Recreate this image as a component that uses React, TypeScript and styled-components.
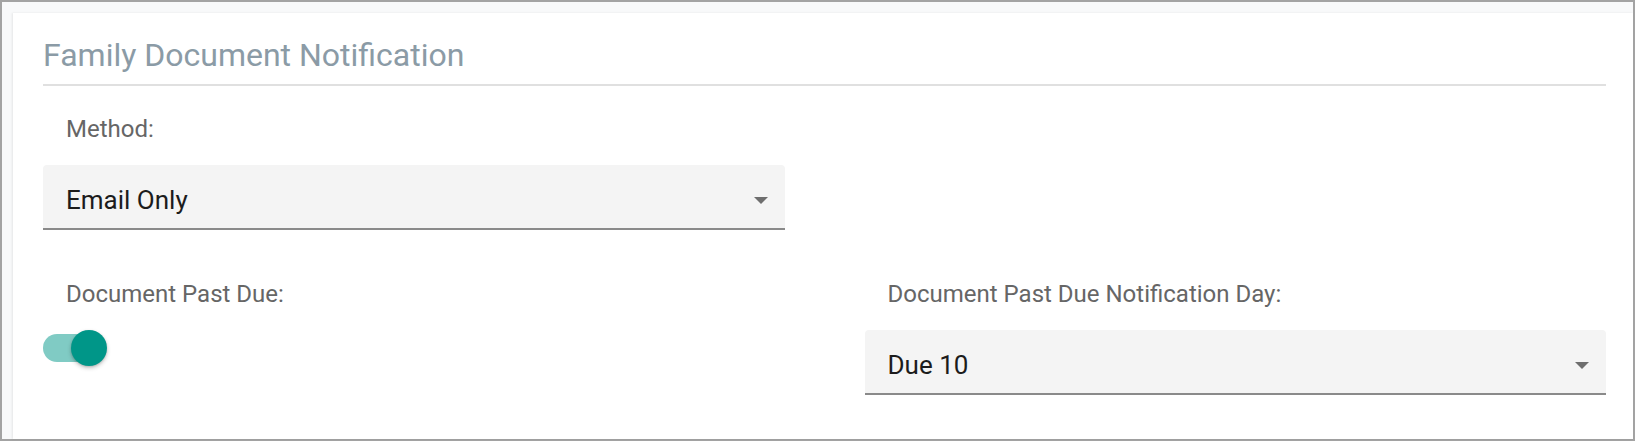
import React from "react";
import styled, { createGlobalStyle } from "styled-components";

const GlobalStyle = createGlobalStyle`
  html, body {
    margin: 0;
    padding: 0;
    background: #ffffff;
  }
  body {
    font-family: Roboto, "Liberation Sans", Arial, sans-serif;
  }
  * { box-sizing: border-box; }
`;

const Frame = styled.div`
  width: 1635px;
  height: 441px;
  border: 2px solid #a3a3a3;
  background: #f8f9fa;
  padding: 11px 0 0 11px;
  display: flex;
`;

const Card = styled.section`
  flex: 1;
  background: #ffffff;
  box-shadow: -1px 0 2px rgba(0, 0, 0, 0.08);
  padding: 23px 27px 0 30px;
  display: flex;
  flex-direction: column;
`;

const Title = styled.h2`
  margin: 0;
  font-family: Roboto, "Liberation Sans", Arial, sans-serif;
  font-weight: 400;
  font-size: 32px;
  line-height: 38px;
  color: #8b9ba6;
  padding-bottom: 10px;
  border-bottom: 2px solid #e0e0e0;
`;

const Grid = styled.div`
  margin-top: 29px;
  display: grid;
  grid-template-columns: 1fr 1fr;
  column-gap: 80px;
  row-gap: 50px;
`;

const Field = styled.div`
  display: flex;
  flex-direction: column;
  gap: 22px;
`;

const Label = styled.div`
  font-size: 24px;
  line-height: 28px;
  color: #666666;
  padding-left: 23px;
`;

const SelectBox = styled.div`
  height: 65px;
  background: #f4f4f4;
  border-radius: 4px 4px 0 0;
  border-bottom: 2px solid #8a8a8a;
  padding: 20px 17px 0 23px;
`;

const SelectRow = styled.div`
  height: 30px;
  display: flex;
  align-items: center;
  justify-content: space-between;
`;

const SelectValue = styled.span`
  font-size: 26px;
  line-height: 30px;
  color: #1c1c1c;
`;

const Caret = styled.span`
  width: 0;
  height: 0;
  border-left: 7px solid transparent;
  border-right: 7px solid transparent;
  border-top: 7px solid #6e6e6e;
  margin-top: 1px;
`;

const Switch = styled.div`
  position: relative;
  width: 64px;
  height: 36px;
`;

const Track = styled.div`
  position: absolute;
  left: 0;
  top: 4px;
  width: 60px;
  height: 28px;
  border-radius: 14px;
  background: #80cbc4;
`;

const Thumb = styled.div`
  position: absolute;
  left: 28px;
  top: 0;
  width: 36px;
  height: 36px;
  border-radius: 50%;
  background: #009688;
  box-shadow: 0 2px 4px rgba(0, 0, 0, 0.22), 0 1px 2px rgba(0, 0, 0, 0.12);
`;

const Select: React.FC<{ value: string }> = ({ value }) => (
  <SelectBox>
    <SelectRow>
      <SelectValue>{value}</SelectValue>
      <Caret />
    </SelectRow>
  </SelectBox>
);

export default function App() {
  return (
    <>
      <GlobalStyle />
      <Frame>
        <Card>
          <Title>Family Document Notification</Title>
          <Grid>
            <Field>
              <Label>Method:</Label>
              <Select value="Email Only" />
            </Field>
            <div />
            <Field>
              <Label>Document Past Due:</Label>
              <Switch role="switch" aria-checked="true">
                <Track />
                <Thumb />
              </Switch>
            </Field>
            <Field>
              <Label>Document Past Due Notification Day:</Label>
              <Select value="Due 10" />
            </Field>
          </Grid>
        </Card>
      </Frame>
    </>
  );
}
